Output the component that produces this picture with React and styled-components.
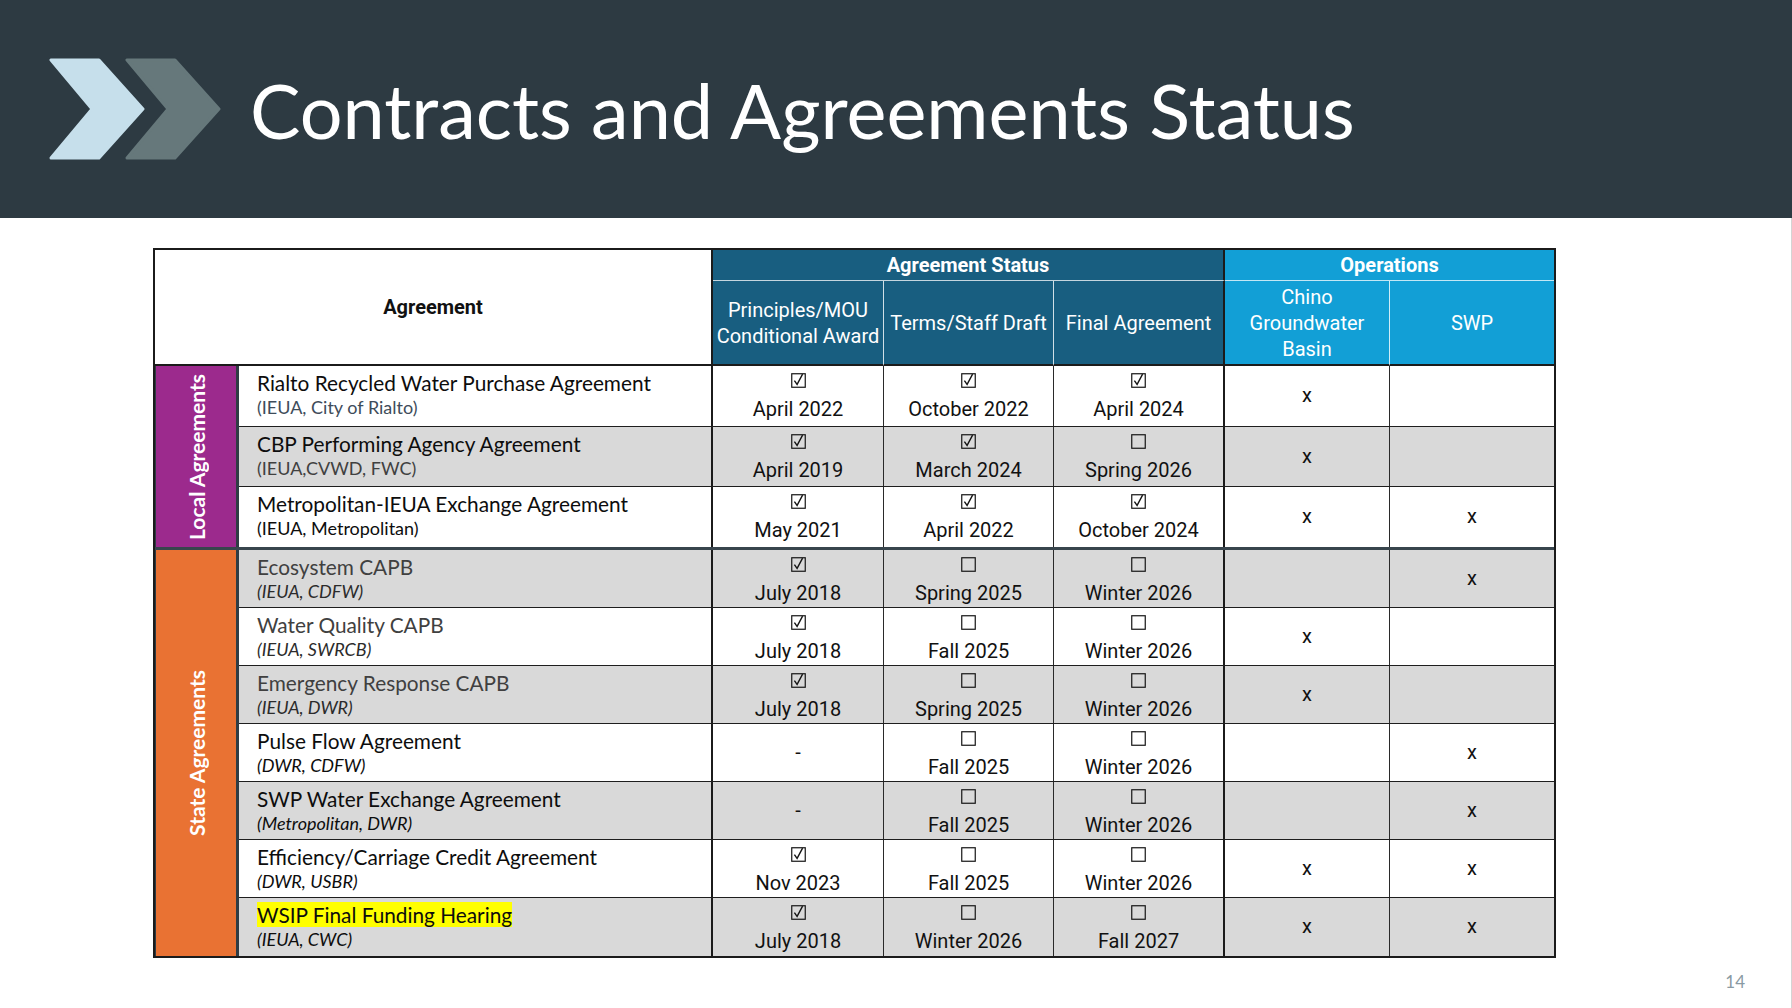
import React from "react";
import styled, { createGlobalStyle } from "styled-components";

const Global = createGlobalStyle`
  html, body { margin: 0; padding: 0; background: #ffffff; }
  body { font-family: "Lato", "Liberation Sans", sans-serif; }
  * { box-sizing: border-box; }
`;

const Page = styled.div`
  width: 1792px;
  height: 1008px;
  display: flex;
  flex-direction: column;
  overflow: hidden;
  background: #fff;
`;

const Banner = styled.header`
  height: 218px;
  flex: none;
  background: #2d3a42;
  display: flex;
  align-items: center;
  padding-left: 49px;
  gap: 29px;
`;

const Title = styled.h1`
  margin: 0;
  font-family: "Lato", "Liberation Sans", sans-serif;
  font-weight: 400;
  font-size: 75.6px;
  color: #ffffff;
  white-space: nowrap;
`;

const Body = styled.main`
  flex: 1;
  display: flex;
  flex-direction: column;
  padding: 30px 0 0 153px;
  border-right: 1px solid #d4d4d4;
`;

const Table = styled.div`
  width: 1403px;
  border: 2px solid #1b1b1b;
  display: flex;
  flex-direction: column;
`;

const HeadGrid = styled.div`
  display: grid;
  grid-template-columns: 558px 171px 170px 171px 165px 164px;
  grid-template-rows: 31px 85px;
`;

const AgreementHead = styled.div`
  grid-column: 1 / 2;
  grid-row: 1 / 3;
  background: #fff;
  border-right: 2px solid #1b1b1b;
  border-bottom: 2px solid #1b1b1b;
  display: flex;
  align-items: center;
  justify-content: center;
  font-family: "Roboto", "Liberation Sans", sans-serif;
  font-weight: 700;
  font-size: 20px;
  color: #111;
`;

const GroupHead = styled.div`
  grid-row: 1 / 2;
  grid-column: ${(p) => p.$cols};
  background: ${(p) => p.$bg};
  border-bottom: 1px solid rgba(255, 255, 255, 0.75);
  border-right: ${(p) => (p.$last ? "none" : "2px solid #1b1b1b")};
  display: flex;
  align-items: center;
  justify-content: center;
  font-family: "Roboto", "Liberation Sans", sans-serif;
  font-weight: 700;
  font-size: 20px;
  color: #fff;
`;

const SubHead = styled.div`
  grid-row: 2 / 3;
  background: ${(p) => p.$bg};
  border-bottom: 2px solid #1b1b1b;
  border-right: ${(p) =>
    p.$edge === "none" ? "none" : p.$edge === "dark" ? "2px solid #1b1b1b" : "1px solid rgba(255,255,255,0.8)"};
  display: flex;
  align-items: center;
  justify-content: center;
  text-align: center;
  font-family: "Roboto", "Liberation Sans", sans-serif;
  font-weight: 400;
  font-size: 20px;
  line-height: 26px;
  color: #fff;
  white-space: pre-line;
`;

const Group = styled.section`
  display: flex;
  border-top: ${(p) => (p.$first ? "none" : "3px solid #38454d")};
`;

const GroupLabel = styled.div`
  width: 84px;
  flex: none;
  background: ${(p) => p.$bg};
  border-left: 1px solid #2f3c44;
  border-right: 3px solid #2f3c44;
  display: flex;
  align-items: center;
  justify-content: center;
`;

const LabelText = styled.span`
  writing-mode: vertical-rl;
  transform: rotate(180deg);
  font-family: "Lato", "Liberation Sans", sans-serif;
  font-weight: 700;
  font-size: 21px;
  color: #fff;
  white-space: nowrap;
`;

const Rows = styled.div`
  flex: 1;
  display: flex;
  flex-direction: column;
`;

const Row = styled.div`
  display: grid;
  grid-template-columns: 474px 171px 170px 171px 165px 164px;
  height: ${(p) => p.$h}px;
  background: ${(p) => (p.$shade ? "#d9d9d9" : "#ffffff")};
  border-bottom: ${(p) => (p.$last ? "none" : "1px solid #1e1e1e")};
`;

const NameCell = styled.div`
  border-right: 2px solid #1b1b1b;
  padding: 4px 0 0 18px;
  display: flex;
  flex-direction: column;
`;

const NameLine = styled.div`
  font-family: "Lato", "Liberation Sans", sans-serif;
  font-size: 20.8px;
  line-height: 25px;
  color: ${(p) => p.$color};
  white-space: nowrap;
`;

const Highlight = styled.span`
  background: #ffff00;
`;

const SubLine = styled.div`
  font-family: "Lato", "Liberation Sans", sans-serif;
  font-size: 18px;
  line-height: 25px;
  font-style: ${(p) => (p.$italic ? "italic" : "normal")};
  color: ${(p) => p.$color};
  white-space: nowrap;
`;

const StatusCell = styled.div`
  border-right: ${(p) => (p.$dark ? "2px solid #1b1b1b" : "1px solid #2a2a2a")};
  display: flex;
  flex-direction: column;
  align-items: center;
  padding-top: 7px;
  font-family: "Roboto", "Liberation Sans", sans-serif;
  font-size: 20px;
  color: #111;
`;

const DateText = styled.div`
  margin-top: 9px;
  line-height: 24px;
  white-space: nowrap;
`;

const CenterCell = styled.div`
  border-right: ${(p) => (p.$last ? "none" : "1px solid #2a2a2a")};
  display: flex;
  align-items: center;
  justify-content: center;
  font-family: "Roboto", "Liberation Sans", sans-serif;
  font-size: 20px;
  color: #111;
  padding-bottom: 2px;
`;

const Footer = styled.div`
  display: flex;
  justify-content: flex-end;
  padding: 13px 46px 0 0;
  font-family: "Lato", "Liberation Sans", sans-serif;
  font-size: 17px;
  color: #8a9aa3;
`;

const Chevrons = () => (
  <svg width="172" height="102" viewBox="0 0 172 102" aria-hidden="true">
    <path
      d="M2 2 L50 2 L94 51 L50 100 L2 100 L43 51 Z"
      fill="#c6dfeb"
      stroke="#c6dfeb"
      strokeWidth="3"
      strokeLinejoin="round"
    />
    <path
      d="M78 2 L126 2 L170 51 L126 100 L78 100 L119 51 Z"
      fill="#66787b"
      stroke="#66787b"
      strokeWidth="3"
      strokeLinejoin="round"
    />
  </svg>
);

const Box = ({ checked }) => (
  <svg width="15" height="15" viewBox="0 0 15 15" aria-hidden="true">
    <rect x="0.75" y="0.75" width="13.5" height="13.5" fill="none" stroke="#151515" strokeWidth="1.2" />
    {checked && (
      <path d="M3.4 7.6 L6.1 11.4 L11.6 1.2" fill="none" stroke="#151515" strokeWidth="1.4" strokeLinejoin="miter" />
    )}
  </svg>
);

const local = [
  {
    title: "Rialto Recycled Water Purchase Agreement",
    sub: "(IEUA, City of Rialto)",
    titleColor: "#0d0d0d",
    subColor: "#3e4c5a",
    status: [["c", "April 2022"], ["c", "October 2022"], ["c", "April 2024"]],
    chino: true,
    swp: false,
  },
  {
    title: "CBP Performing Agency Agreement",
    sub: "(IEUA,CVWD, FWC)",
    titleColor: "#0d0d0d",
    subColor: "#404040",
    status: [["c", "April 2019"], ["c", "March 2024"], ["b", "Spring 2026"]],
    chino: true,
    swp: false,
  },
  {
    title: "Metropolitan-IEUA Exchange Agreement",
    sub: "(IEUA, Metropolitan)",
    titleColor: "#0d0d0d",
    subColor: "#0d0d0d",
    status: [["c", "May 2021"], ["c", "April 2022"], ["c", "October 2024"]],
    chino: true,
    swp: true,
  },
];

const state = [
  {
    title: "Ecosystem CAPB",
    sub: "(IEUA, CDFW)",
    titleColor: "#404040",
    subColor: "#2b2b2b",
    status: [["c", "July 2018"], ["b", "Spring 2025"], ["b", "Winter 2026"]],
    chino: false,
    swp: true,
  },
  {
    title: "Water Quality CAPB",
    sub: "(IEUA, SWRCB)",
    titleColor: "#404040",
    subColor: "#2b2b2b",
    status: [["c", "July 2018"], ["b", "Fall 2025"], ["b", "Winter 2026"]],
    chino: true,
    swp: false,
  },
  {
    title: "Emergency Response CAPB",
    sub: "(IEUA, DWR)",
    titleColor: "#404040",
    subColor: "#2b2b2b",
    status: [["c", "July 2018"], ["b", "Spring 2025"], ["b", "Winter 2026"]],
    chino: true,
    swp: false,
  },
  {
    title: "Pulse Flow Agreement",
    sub: "(DWR, CDFW)",
    titleColor: "#0d0d0d",
    subColor: "#0d0d0d",
    status: [["-", ""], ["b", "Fall 2025"], ["b", "Winter 2026"]],
    chino: false,
    swp: true,
  },
  {
    title: "SWP Water Exchange Agreement",
    sub: "(Metropolitan, DWR)",
    titleColor: "#0d0d0d",
    subColor: "#0d0d0d",
    status: [["-", ""], ["b", "Fall 2025"], ["b", "Winter 2026"]],
    chino: false,
    swp: true,
  },
  {
    title: "Efficiency/Carriage Credit Agreement",
    sub: "(DWR, USBR)",
    titleColor: "#0d0d0d",
    subColor: "#0d0d0d",
    status: [["c", "Nov 2023"], ["b", "Fall 2025"], ["b", "Winter 2026"]],
    chino: true,
    swp: true,
  },
  {
    title: "WSIP Final Funding Hearing",
    sub: "(IEUA, CWC)",
    titleColor: "#0d0d0d",
    subColor: "#0d0d0d",
    highlight: true,
    status: [["c", "July 2018"], ["b", "Winter 2026"], ["b", "Fall 2027"]],
    chino: true,
    swp: true,
  },
];

const DataRow = ({ r, h, shade, last, italic }) => (
  <Row $h={h} $shade={shade} $last={last}>
    <NameCell>
      <NameLine $color={r.titleColor}>
        {r.highlight ? <Highlight>{r.title}</Highlight> : r.title}
      </NameLine>
      <SubLine $italic={italic} $color={r.subColor}>
        {r.sub}
      </SubLine>
    </NameCell>
    {r.status.map(([kind, date], i) =>
      kind === "-" ? (
        <CenterCell key={i}>-</CenterCell>
      ) : (
        <StatusCell key={i} $dark={i === 2}>
          <Box checked={kind === "c"} />
          <DateText>{date}</DateText>
        </StatusCell>
      )
    )}
    <CenterCell>{r.chino ? "x" : ""}</CenterCell>
    <CenterCell $last>{r.swp ? "x" : ""}</CenterCell>
  </Row>
);

const localHeights = [61, 60, 60];

export default function App() {
  return (
    <Page>
      <Global />
      <Banner>
        <Chevrons />
        <Title>Contracts and Agreements Status</Title>
      </Banner>
      <Body>
        <Table>
          <HeadGrid>
            <AgreementHead>Agreement</AgreementHead>
            <GroupHead $cols="2 / 5" $bg="#185e80">
              Agreement Status
            </GroupHead>
            <GroupHead $cols="5 / 7" $bg="#129fd6" $last>
              Operations
            </GroupHead>
            <SubHead $bg="#185e80">{"Principles/MOU\nConditional Award"}</SubHead>
            <SubHead $bg="#185e80">Terms/Staff Draft</SubHead>
            <SubHead $bg="#185e80" $edge="dark">
              Final Agreement
            </SubHead>
            <SubHead $bg="#129fd6">{"Chino\nGroundwater\nBasin"}</SubHead>
            <SubHead $bg="#129fd6" $edge="none">
              SWP
            </SubHead>
          </HeadGrid>
          <Group $first>
            <GroupLabel $bg="#9c2a8d">
              <LabelText>Local Agreements</LabelText>
            </GroupLabel>
            <Rows>
              {local.map((r, i) => (
                <DataRow
                  key={r.title}
                  r={r}
                  h={localHeights[i]}
                  shade={i % 2 === 1}
                  last={i === local.length - 1}
                  italic={false}
                />
              ))}
            </Rows>
          </Group>
          <Group>
            <GroupLabel $bg="#e97233">
              <LabelText>State Agreements</LabelText>
            </GroupLabel>
            <Rows>
              {state.map((r, i) => (
                <DataRow
                  key={r.title}
                  r={r}
                  h={58}
                  shade={i % 2 === 0}
                  last={i === state.length - 1}
                  italic={true}
                />
              ))}
            </Rows>
          </Group>
        </Table>
        <Footer>14</Footer>
      </Body>
    </Page>
  );
}
